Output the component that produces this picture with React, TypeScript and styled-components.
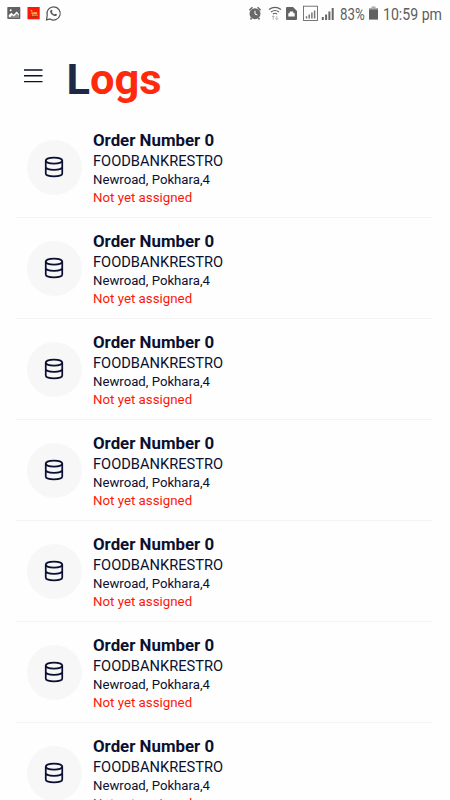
import React from "react";
import styled, { createGlobalStyle } from "styled-components";

const GlobalStyle = createGlobalStyle`
  * { box-sizing: border-box; }
  body { margin: 0; background: #fefefe; font-family: Roboto, sans-serif; }
`;

const Screen = styled.main`
  width: 450px;
  height: 800px;
  overflow: hidden;
  background: #fefefe;
  color: #0b1030;
`;

const StatusBar = styled.div`
  height: 28px;
  padding: 0 8px 0 6px;
  display: flex;
  align-items: center;
  justify-content: space-between;
  color: #5d5d5d;
`;

const StatusGroup = styled.div`
  display: flex;
  align-items: center;
  height: 28px;
  svg { display: block; flex: none; }
`;

const StatusText = styled.span<{ $width: number; $scale: number }>`
  width: ${(p) => p.$width}px;
  font-size: 17px;
  line-height: 28px;
  white-space: nowrap;
  transform: scaleX(${(p) => p.$scale});
  transform-origin: left center;
`;

const Header = styled.header`
  height: 90px;
  display: flex;
  align-items: flex-start;
  padding: 25px 0 0 23px;
`;

const MenuButton = styled.button`
  width: 43.5px;
  height: 46px;
  padding: 0;
  border: 0;
  background: none;
  color: #0b1030;
  text-align: left;
  svg { display: block; }
`;

const Title = styled.h1`
  margin: 0;
  font-size: 43.4px;
  line-height: 54px;
  font-weight: 700;
  color: #ff2a0d;
`;

const TitleInitial = styled.span`
  color: #1d2746;
`;

const List = styled.ul`
  margin: 0;
  padding: 0 17px 0 16px;
  list-style: none;
`;

const Row = styled.li`
  height: 101px;
  display: flex;
  padding: 12.3px 0 0 11px;
  border-bottom: 1px solid #f4f4f4;

  &:first-child {
    height: 100px;
    padding-top: 11.3px;
  }
`;

const Avatar = styled.div`
  width: 55px;
  height: 55px;
  margin: 10.4px 11px 0 0;
  border-radius: 50%;
  background: #f7f7f7;
  display: grid;
  place-items: center;
  svg { display: block; margin-right: 1px; }
`;

const Details = styled.div`
  display: flex;
  flex-direction: column;
  white-space: nowrap;
`;

const OrderName = styled.strong`
  font-size: 16.85px;
  line-height: 22.8px;
  font-weight: 700;
`;

const Restaurant = styled.span`
  font-size: 14.65px;
  line-height: 19px;
`;

const Address = styled.span`
  font-size: 13.2px;
  line-height: 18px;
`;

const Assignment = styled.span`
  font-size: 13.3px;
  line-height: 18px;
  color: #ff1607;
`;

const DatabaseIcon = () => (
  <svg width="22" height="22" viewBox="0 0 24 24" fill="none" stroke="#0b1030" strokeWidth="1.9">
    <ellipse cx="12" cy="5" rx="9" ry="3.3" />
    <path d="M21 12c0 1.8-4 3.2-9 3.2s-9-1.4-9-3.2M3 5v14c0 1.8 4 3.2 9 3.2s9-1.4 9-3.2V5" />
  </svg>
);

const NotificationIcons = () => (
  <svg width="58" height="28" viewBox="0 0 58 28">
    <rect x="1.3" y="7" width="13" height="12" rx=".7" fill="#626262" />
    <path d="M2.8 17.3v-2.2l2.6-2.4 2.2 2 3.1-3.3 2.2 2.5v3.4z" fill="#fefefe" />
    <path d="M4 17.2l2-2 2 1.2 2.8-2.8 2 2v1.6z" fill="#8a8a8a" />
    <circle cx="4.7" cy="10.2" r="1" fill="#fefefe" />
    <rect x="21.5" y="7" width="12.2" height="12.3" fill="#ff1708" />
    <path d="M24.5 9.5l1.8 1v2.2l3-.8 2.2.6-.6 1.5 1 2.2h-3.2l-3.4.8 1.4-2.3-1.8-1.8z" fill="#ffb14c" />
    <path d="M24 11.5l2 .8m1 2.5l4 .2m-6.5 1.6h7" stroke="#9b2a18" strokeWidth=".9" />
    <path d="M41.2 14.9A6.6 6.6 0 1 1 44 18.9L40.6 19.8z" fill="none" stroke="#555" strokeWidth="1.25" />
    <path d="M44.6 10.3c.4-1 1.3-.8 1.6.2l.3.8-.7.8c.6 1.2 1.4 2 2.7 2.5l.8-.9c.5.1 2 .7 1.8 1.1-.5 1.7-2.3 1.4-3.8.7-1.9-.9-4-3.3-2.7-5.2z" fill="#555" />
  </svg>
);

const SystemIcons = () => (
  <svg width="92" height="28" viewBox="248 0 92 28">
    <circle cx="255" cy="13.7" r="5.5" fill="#686868" />
    <path d="M249.4 10.2l3-3m5.2 0l3 3M251.5 18l-1 1.5m8-1.5l1 1.5" stroke="#686868" strokeWidth="1.5" />
    <path d="M255 10.8v3.3l2.4.8" fill="none" stroke="#fefefe" strokeWidth="1" />
    <path d="M269 9.6q6-4.6 12 0M271 12q4-3 8 0M273 14q2-1.5 4 0" fill="none" stroke="#606060" strokeWidth="1.2" />
    <path d="M273.3 15.8v4m-1.4-2.6l1.4-1.4 1.4 1.4M276.8 15.8v4m-1.4-1.4l1.4 1.4 1.4-1.4" fill="none" stroke="#a5a5a5" strokeWidth=".8" />
    <path d="M286 8q0-1 1-1h6l4 4v8q0 1-1 1h-9q-1 0-1-1z" fill="#646464" />
    <path d="M288.3 16.5v-3.3h1.2l.4-1.6h3.2l.4 1.6h1.2v3.3z" fill="#fefefe" />
    <rect x="303.5" y="6.2" width="14" height="14.3" fill="none" stroke="#686868" strokeWidth=".9" />
    <path d="M306.5 16.2v2.3m2.7-4v4m2.7-6v6m2.7-8v8" stroke="#777" strokeWidth="1.5" />
    <path d="M322.8 17v3m3.3-5.5V20m3.3-8.5V20m3.3-12V20" stroke="#666" strokeWidth="2" />
  </svg>
);

const BatteryIcon = () => (
  <svg width="17" height="28" viewBox="0 0 17 28">
    <path d="M3 9h9v10.6H3z" fill="#626262" />
    <path d="M5.5 6.5h4V8H12v1.6H3V8h2.5z" fill="#aaa" />
  </svg>
);

const orders = Array.from({ length: 7 }, (_, index) => ({
  id: index,
  name: "Order Number 0",
  restaurant: "FOODBANKRESTRO",
  address: "Newroad, Pokhara,4",
  status: "Not yet assigned",
}));

export default function App() {
  return (
    <>
      <GlobalStyle />
      <Screen>
        <StatusBar>
          <StatusGroup><NotificationIcons /></StatusGroup>
          <StatusGroup>
            <SystemIcons />
            <StatusText $width={26} $scale={0.78}>83%</StatusText>
            <BatteryIcon />
            <StatusText $width={59} $scale={0.83}>10:59 pm</StatusText>
          </StatusGroup>
        </StatusBar>
        <Header>
          <MenuButton aria-label="Open menu">
            <svg width="20" height="16" viewBox="0 0 20 16" stroke="currentColor" strokeWidth="1.4">
              <path d="M1 2h18.5M1 7.7h18.5M1 13.6h18.5" />
            </svg>
          </MenuButton>
          <Title><TitleInitial>L</TitleInitial>ogs</Title>
        </Header>
        <List>
          {orders.map((order) => (
            <Row key={order.id}>
              <Avatar><DatabaseIcon /></Avatar>
              <Details>
                <OrderName>{order.name}</OrderName>
                <Restaurant>{order.restaurant}</Restaurant>
                <Address>{order.address}</Address>
                <Assignment>{order.status}</Assignment>
              </Details>
            </Row>
          ))}
        </List>
      </Screen>
    </>
  );
}
